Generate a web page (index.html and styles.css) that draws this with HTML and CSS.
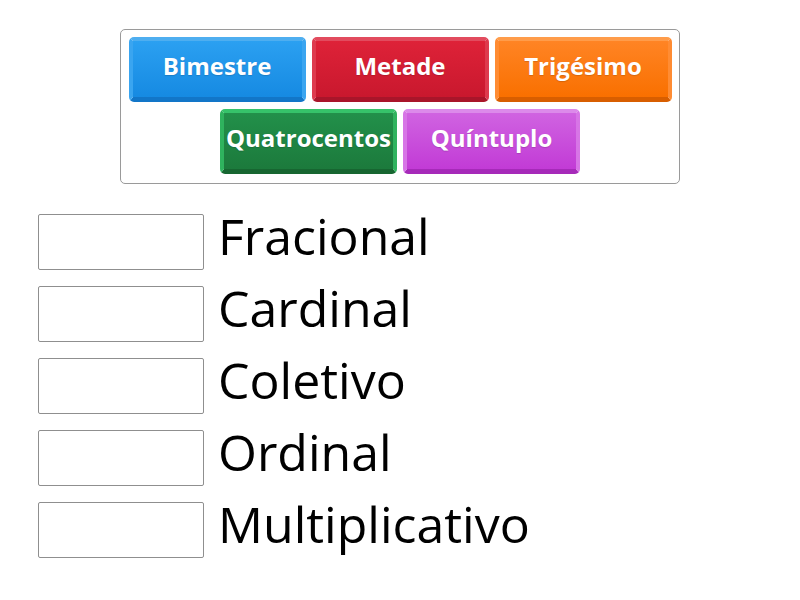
FILE: index.html
```html
<!DOCTYPE html>
<html lang="pt-BR">
<head>
  <meta charset="UTF-8">
  <title>Numerais</title>
  <meta name="viewport" content="width=device-width, initial-scale=1.0">
  <link rel="stylesheet" href="styles.css">
</head>
<body>
  <div class="page">
    <div class="bank">
      <div class="tile blue">Bimestre</div>
      <div class="tile red">Metade</div>
      <div class="tile orange">Trigésimo</div>
      <div class="tile green">Quatrocentos</div>
      <div class="tile purple">Quíntuplo</div>
    </div>
    <div class="targets">
      <div class="target-row"><div class="drop"></div><span class="label">Fracional</span></div>
      <div class="target-row"><div class="drop"></div><span class="label">Cardinal</span></div>
      <div class="target-row"><div class="drop"></div><span class="label">Coletivo</span></div>
      <div class="target-row"><div class="drop"></div><span class="label">Ordinal</span></div>
      <div class="target-row"><div class="drop"></div><span class="label">Multiplicativo</span></div>
    </div>
  </div>
</body>
</html>
```

FILE: styles.css
```css
body { margin: 0; background: #fff; font-family: 'Open Sans', 'Liberation Sans', Arial, sans-serif; }
.page { width: 800px; height: 600px; padding-top: 29px; box-sizing: border-box; }
.bank { width: 560px; height: 155px; margin-left: 120px; box-sizing: border-box; border: 1px solid #9a9a9a; border-radius: 5px; padding: 7px 6px; display: flex; flex-wrap: wrap; justify-content: center; align-content: flex-start; column-gap: 6px; row-gap: 7px; }
.tile { width: 177px; height: 65px; box-sizing: border-box; border: 4px solid; border-bottom-width: 5px; border-radius: 5px; display: flex; align-items: center; justify-content: center; padding-bottom: 7px; color: #fff; font-weight: 700; font-size: 24px; text-shadow: 0 1px 1px rgba(0,0,0,0.15); }
.tile.blue { background: linear-gradient(#2ba0f1, #168ae2); border-color: #4eaef0 #3aa5f0 #1276c8; }
.tile.red { background: linear-gradient(#de2238, #c9182e); border-color: #e24b5e #de3a4e #a9152a; }
.tile.orange { background: linear-gradient(#ff8424, #f97000); border-color: #ff9c4a #ff8c33 #d85e00; }
.tile.green { background: linear-gradient(#22904a, #1c7a3c); border-color: #36c36a #2fb35e #176631; }
.tile.purple { background: linear-gradient(#d063e1, #c23bd6); border-color: #dc8aea #d775e6 #a62ab9; }
.targets { margin-top: 30px; margin-left: 38px; display: flex; flex-direction: column; gap: 16px; }
.target-row { display: flex; align-items: center; height: 56px; }
.drop { width: 166px; height: 56px; box-sizing: border-box; border: 1px solid #8f8f8f; border-radius: 2px; background: #fff; }
.label { margin-left: 14px; font-size: 50px; color: #000; line-height: 1; position: relative; top: -6px; }
```
